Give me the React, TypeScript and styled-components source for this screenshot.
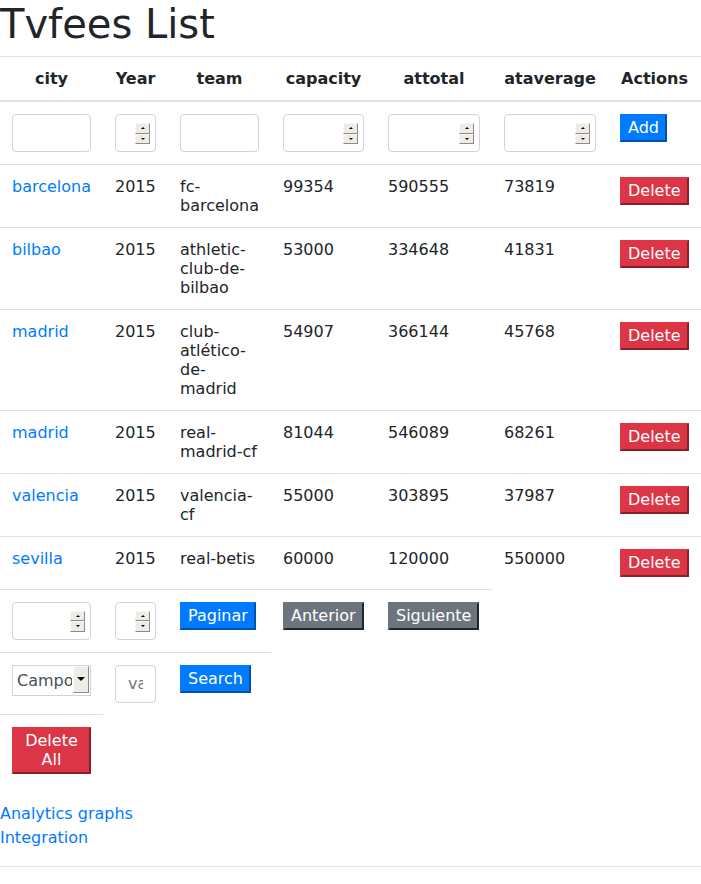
import React from "react";
import styled, { createGlobalStyle } from "styled-components";

const GlobalStyle = createGlobalStyle`
  body {
    margin: 0;
    font-family: "DejaVu Sans", "Liberation Sans", sans-serif;
    font-size: 16px;
    line-height: 1.5;
    color: #212529;
    background: #fff;
  }
`;

const Title = styled.h1`
  margin: 0 0 8px;
  font-size: 40px;
  font-weight: 400;
  line-height: 1.2;
`;

const Table = styled.table`
  width: 100%;
  table-layout: fixed;
  border-collapse: collapse;
  margin-bottom: 16px;
  line-height: normal;
`;

const HeadCell = styled.th`
  padding: 12px;
  border-top: 1px solid #dee2e6;
  border-bottom: 2px solid #dee2e6;
  vertical-align: bottom;
  text-align: center;
  font-weight: 700;
  white-space: nowrap;
`;

const Cell = styled.td`
  padding: 12px;
  border-top: 1px solid #dee2e6;
  vertical-align: top;
`;

const CityLink = styled.a`
  color: #007bff;
  text-decoration: none;
`;

const Field = styled.input`
  box-sizing: border-box;
  display: block;
  width: 100%;
  height: 38px;
  padding: 6px 12px;
  font: inherit;
  color: #495057;
  background: #fff;
  border: 1px solid #ced4da;
  border-radius: 4px;
  -moz-appearance: textfield;

  &::-webkit-inner-spin-button,
  &::-webkit-outer-spin-button {
    -webkit-appearance: none;
    margin: 0;
  }
`;

const Boxed = styled.div`
  position: relative;
`;

const Spinner = styled.div`
  position: absolute;
  top: 9px;
  right: 6px;
  width: 15px;
  height: 21px;
  display: flex;
  flex-direction: column;
  pointer-events: none;
`;

const SpinPart = styled.span`
  flex: 1;
  display: flex;
  align-items: center;
  justify-content: center;
  background: #efebe7;
  border: 1px solid;
  border-color: #fbfaf9 #8e8a85 #8e8a85 #fbfaf9;
`;

const Arrow = styled.span<{ $dir: "up" | "down"; $size?: number }>`
  width: 0;
  height: 0;
  border-left: ${({ $size = 2 }) => $size}px solid transparent;
  border-right: ${({ $size = 2 }) => $size}px solid transparent;
  ${({ $dir, $size = 2 }) =>
    $dir === "up"
      ? `border-bottom: ${$size}px solid #000;`
      : `border-top: ${$size}px solid #000;`}
`;

const Select = styled.select`
  box-sizing: border-box;
  display: block;
  width: 100%;
  height: 31px;
  padding: 0 18px 0 4px;
  font: inherit;
  color: #495057;
  background: #fff;
  border: 1px solid #ced4da;
  border-radius: 0;
  appearance: none;
  -webkit-appearance: none;
`;

const SelectButton = styled.span`
  position: absolute;
  top: 1px;
  right: 2px;
  width: 16px;
  height: 27px;
  box-sizing: border-box;
  display: flex;
  align-items: center;
  justify-content: center;
  background: #efebe7;
  border: 1px solid;
  border-color: #fbfaf9 #8e8a85 #8e8a85 #fbfaf9;
  pointer-events: none;
`;

const tones = {
  primary: "#007bff",
  secondary: "#6c757d",
  danger: "#dc3545",
};

const Button = styled.button<{ $tone: keyof typeof tones }>`
  box-sizing: border-box;
  min-height: 28px;
  font: inherit;
  line-height: normal;
  padding: 2px 6px 3px;
  color: #fff;
  background: ${({ $tone }) => tones[$tone]};
  border: 2px outset ${({ $tone }) => tones[$tone]};
  cursor: pointer;
`;

const Links = styled.div`
  display: flex;
  flex-direction: column;
  align-items: flex-start;
`;

const Rule = styled.hr`
  margin: 16px 0;
  border: 0;
  border-top: 1px solid rgba(0, 0, 0, 0.1);
`;

function NumberField() {
  return (
    <Boxed>
      <Field type="number" />
      <Spinner>
        <SpinPart><Arrow $dir="up" /></SpinPart>
        <SpinPart><Arrow $dir="down" /></SpinPart>
      </Spinner>
    </Boxed>
  );
}

const rows = [
  ["barcelona", "2015", "fc-barcelona", "99354", "590555", "73819"],
  ["bilbao", "2015", "athletic-club-de-bilbao", "53000", "334648", "41831"],
  ["madrid", "2015", "club-atlético-de-madrid", "54907", "366144", "45768"],
  ["madrid", "2015", "real-madrid-cf", "81044", "546089", "68261"],
  ["valencia", "2015", "valencia-cf", "55000", "303895", "37987"],
  ["sevilla", "2015", "real-betis", "60000", "120000", "550000"],
];

const columns = [
  ["city", 103],
  ["Year", 65],
  ["team", 103],
  ["capacity", 105],
  ["attotal", 116],
  ["ataverage", 116],
  ["Actions", 93],
] as const;

export default function App() {
  return (
    <>
      <GlobalStyle />
      <Title>Tvfees List</Title>
      <Table>
        <colgroup>
          {columns.map(([name, w]) => (
            <col key={name} style={{ width: w }} />
          ))}
        </colgroup>
        <thead>
          <tr>
            {columns.map(([name]) => (
              <HeadCell key={name}>{name}</HeadCell>
            ))}
          </tr>
        </thead>
        <tbody>
          <tr>
            <Cell><Field type="text" /></Cell>
            <Cell><NumberField /></Cell>
            <Cell><Field type="text" /></Cell>
            <Cell><NumberField /></Cell>
            <Cell><NumberField /></Cell>
            <Cell><NumberField /></Cell>
            <Cell><Button $tone="primary">Add</Button></Cell>
          </tr>
          {rows.map((r, i) => (
            <tr key={i}>
              <Cell><CityLink href="#">{r[0]}</CityLink></Cell>
              <Cell>{r[1]}</Cell>
              <Cell>{r[2]}</Cell>
              <Cell>{r[3]}</Cell>
              <Cell>{r[4]}</Cell>
              <Cell>{r[5]}</Cell>
              <Cell><Button $tone="danger">Delete</Button></Cell>
            </tr>
          ))}
          <tr>
            <Cell><NumberField /></Cell>
            <Cell><NumberField /></Cell>
            <Cell><Button $tone="primary">Paginar</Button></Cell>
            <Cell><Button $tone="secondary">Anterior</Button></Cell>
            <Cell><Button $tone="secondary">Siguiente</Button></Cell>
          </tr>
          <tr>
            <Cell>
              <Boxed>
                <Select defaultValue="">
                  <option value="">Campo</option>
                  <option value="city">city</option>
                  <option value="year">year</option>
                </Select>
                <SelectButton><Arrow $dir="down" $size={4} /></SelectButton>
              </Boxed>
            </Cell>
            <Cell><Field type="text" placeholder="value" /></Cell>
            <Cell><Button $tone="primary">Search</Button></Cell>
          </tr>
          <tr>
            <Cell><Button $tone="danger">Delete All</Button></Cell>
          </tr>
        </tbody>
      </Table>
      <Links>
        <CityLink href="#">Analytics graphs</CityLink>
        <CityLink href="#">Integration</CityLink>
      </Links>
      <Rule />
    </>
  );
}
